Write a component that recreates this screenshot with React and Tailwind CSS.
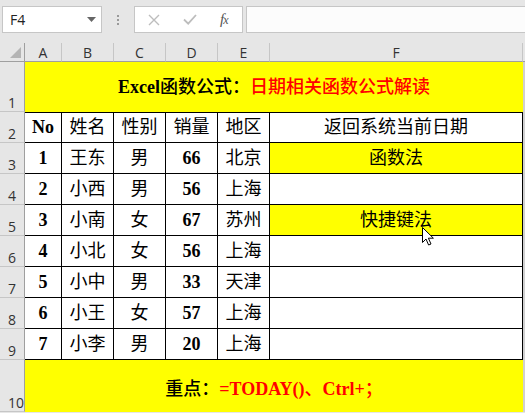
import React from "react";

const serif = { fontFamily: '"Liberation Serif", "Noto Sans CJK SC", serif' };

const rows = [
  ["1", "王东", "男", "66", "北京", "函数法", true],
  ["2", "小西", "男", "56", "上海", "", false],
  ["3", "小南", "女", "67", "苏州", "快捷键法", true],
  ["4", "小北", "女", "56", "上海", "", false],
  ["5", "小中", "男", "33", "天津", "", false],
  ["6", "小王", "女", "57", "上海", "", false],
  ["7", "小李", "男", "20", "上海", "", false],
];

const RowHead = ({ n, h }) => (
  <div
    className={`${h} flex items-end pl-[8px] pb-[1px] bg-[#e6e6e6] border-r border-b border-r-[#9f9f9f] border-b-[#c6c6c6] text-[14px] leading-none text-[#333] font-['Open_Sans',sans-serif]`}
  >
    {n}
  </div>
);

const Cell = ({ children, yellow, bold, top }) => (
  <div
    className={`h-[31px] flex items-center justify-center border-r border-b border-black ${top ? "border-t" : ""} ${
      yellow ? "bg-[#ffff00]" : "bg-white"
    } text-[18px] text-black ${bold ? "font-bold" : "font-normal"}`}
    style={serif}
  >
    {children}
  </div>
);

export default function App() {
  return (
    <div className="w-[525px] h-[413px] overflow-hidden bg-[#e6e6e6] relative select-none">
      {/* formula bar */}
      <div className="h-[43px] flex items-start pt-[6px]">
        <div className="ml-[2px] w-[100px] h-[27px] bg-white border border-[#c6c6c6] flex items-center justify-between pl-[7px] pr-[5px]">
          <span className="text-[14px] text-[#222] font-['Open_Sans',sans-serif]">F4</span>
          <svg width="9" height="5" viewBox="0 0 9 5">
            <path d="M0 0h9L4.5 5z" fill="#666" />
          </svg>
        </div>
        <div className="w-[32px] h-[27px] flex flex-col items-center justify-center gap-[2px]">
          <span className="w-[2px] h-[2px] bg-[#999]" />
          <span className="w-[2px] h-[2px] bg-[#999]" />
          <span className="w-[2px] h-[2px] bg-[#999]" />
        </div>
        <div className="w-[109px] h-[27px] bg-white border border-[#c6c6c6] flex items-center pl-[13px] gap-[23px]">
          <svg width="12" height="12" viewBox="0 0 12 12">
            <path d="M1 1l10 10M11 1L1 11" stroke="#bdbdbd" strokeWidth="1.4" />
          </svg>
          <svg width="14" height="11" viewBox="0 0 14 11">
            <path d="M1 5.5l4.2 4.2L13 1" stroke="#bdbdbd" strokeWidth="1.8" fill="none" />
          </svg>
          <span className="text-[15px] italic text-[#555] font-['Liberation_Serif',serif] tracking-[-1px]">
            f<span className="text-[12px]">x</span>
          </span>
        </div>
        <div className="ml-[3px] flex-1 h-[27px] bg-[#fcfcfc] border-y border-l border-[#c6c6c6]" />
      </div>

      {/* sheet */}
      <div className="grid grid-cols-[25px_37px_52px_52px_52px_52px_253px_2px]">
        {/* column headers */}
        <div className="h-[19px] bg-[#e6e6e6] border-b border-r border-[#9f9f9f] relative">
          <svg className="absolute right-[3px] bottom-[3px]" width="11" height="11" viewBox="0 0 11 11">
            <path d="M11 0v11H0z" fill="#b4b4b4" />
          </svg>
        </div>
        {["A", "B", "C", "D", "E", "F"].map((c) => (
          <div
            key={c}
            className="h-[19px] flex items-end justify-center pb-[1px] bg-[#e6e6e6] border-b border-r border-b-[#9f9f9f] border-r-[#c6c6c6] text-[14px] leading-none text-[#333] font-['Open_Sans',sans-serif]"
          >
            {c}
          </div>
        ))}
        <div className="h-[19px] border-b border-[#9f9f9f]" />

        {/* row 1 */}
        <RowHead n="1" h="h-[50px]" />
        <div
          className="col-span-6 h-[50px] bg-[#ffff00] flex items-center justify-center text-[18px] pt-[1px]"
          style={serif}
        >
          <span className="text-black font-bold">Excel</span>
          <span className="text-black font-medium">函数公式：</span>
          <span className="text-[#ff0000] font-medium">日期相关函数公式解读</span>
        </div>
        <div className="h-[50px] bg-[#d0d0d0]" />

        {/* row 2 header */}
        <RowHead n="2" h="h-[31px]" />
        <Cell top bold>No</Cell>
        <Cell top>姓名</Cell>
        <Cell top>性别</Cell>
        <Cell top>销量</Cell>
        <Cell top>地区</Cell>
        <Cell top>返回系统当前日期</Cell>
        <div className="h-[31px] bg-[#d0d0d0]" />

        {rows.map((r, i) => (
          <React.Fragment key={i}>
            <RowHead n={String(i + 3)} h="h-[31px]" />
            <Cell bold>{r[0]}</Cell>
            <Cell>{r[1]}</Cell>
            <Cell>{r[2]}</Cell>
            <Cell bold>{r[3]}</Cell>
            <Cell>{r[4]}</Cell>
            <Cell yellow={r[6]}>{r[5]}</Cell>
            <div className="h-[31px] bg-[#d0d0d0]" />
          </React.Fragment>
        ))}

        {/* row 10 */}
        <RowHead n="10" h="h-[52px]" />
        <div
          className="col-span-6 h-[52px] bg-[#ffff00] flex items-center justify-center pt-[6px] text-[18px]"
          style={serif}
        >
          <span className="text-black font-medium">重点：</span>
          <span className="text-[#ff0000] font-bold">=TODAY()</span>
          <span className="text-[#ff0000] font-medium">、</span>
          <span className="text-[#ff0000] font-bold">Ctrl+</span>
          <span className="text-[#ff0000] font-medium">；</span>
        </div>
        <div className="h-[52px] bg-[#d0d0d0]" />
      </div>

      {/* mouse pointer */}
      <svg className="absolute left-[422px] top-[227px]" width="13" height="20" viewBox="0 0 13 20">
        <path
          d="M0.5 0.5v15l3.5-3.5 2.6 6 2.4-1-2.6-5.8h5z"
          fill="#fff"
          stroke="#000"
          strokeWidth="1"
          strokeLinejoin="round"
        />
      </svg>
    </div>
  );
}
